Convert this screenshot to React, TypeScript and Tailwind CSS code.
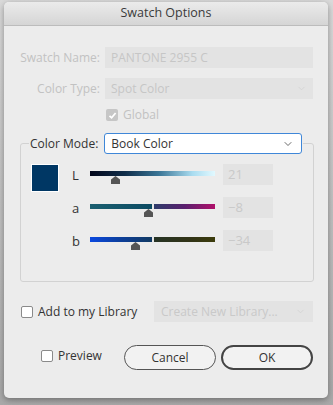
import { ChevronDown } from "lucide-react";

const font = { fontFamily: '"Open Sans", "Noto Sans", sans-serif' };

function Check({ checked, disabled }: { checked?: boolean; disabled?: boolean }) {
  if (checked) {
    return (
      <span
        className={`flex h-[12px] w-[12px] items-center justify-center rounded-[2px] ${
          disabled ? "bg-[#c6c6c6]" : "bg-[#3a7be0]"
        }`}
      >
        <svg width="9" height="9" viewBox="0 0 9 9">
          <path d="M1.5 4.8 L3.6 6.8 L7.6 2" fill="none" stroke="#fff" strokeWidth="1.8" />
        </svg>
      </span>
    );
  }
  return <span className="block h-[12px] w-[12px] rounded-[2px] border border-[#8a8a8a] bg-white" />;
}

function Thumb() {
  return (
    <svg width="11" height="8" viewBox="0 0 11 8" className="block">
      <path d="M5.5 0 L10 3.5 L10 8 L1 8 L1 3.5 Z" fill="#555" />
    </svg>
  );
}

const sliders = [
  {
    label: "L",
    value: "21",
    pos: 25.5,
    track: "bg-[linear-gradient(to_right,#02061a_0%,#0f2d4a_28%,#3a7596_55%,#a9dcf0_82%,#e2f9ff_100%)]",
    split: false,
  },
  {
    label: "a",
    value: "\u22128",
    pos: 58.5,
    track: "",
    split: true,
    left: "bg-[linear-gradient(to_right,#1b5f70,#0b4a62)]",
    right: "bg-[linear-gradient(to_right,#2d3c6a,#5a1f6e_50%,#b0106a)]",
  },
  {
    label: "b",
    value: "\u221234",
    pos: 45.5,
    track: "",
    split: true,
    left: "bg-[linear-gradient(to_right,#0a48e0,#0d3f9a_50%,#123a62)]",
    right: "bg-[linear-gradient(to_right,#273425,#323417_60%,#3c3c0c)]",
  },
];

export default function App() {
  return (
    <div className="h-[405px] w-[333px] bg-[linear-gradient(to_bottom,#dadada,#bdbdbd_60%,#a9a9a9)] pl-[4px] pr-[5px] pt-[2px] pb-[7px]" style={font}>
      <div className="flex h-full flex-col overflow-hidden rounded-[5px] bg-[#ececec] text-[12px] shadow-[0_2px_6px_rgba(0,0,0,0.35)]">
        <div className="flex h-[24px] items-center justify-center border-b border-[#bcbcbc] bg-[linear-gradient(to_bottom,#ebebeb,#d5d5d5)] text-[12.5px] text-[#3a3a3a]">
          Swatch Options
        </div>

        <div className="mt-[21px] flex h-[21px] items-center">
          <span className="w-[97px] pr-[1px] text-right text-[#c2c2c2]">Swatch Name:</span>
          <div className="ml-[4px] flex h-[21px] w-[208px] items-center bg-[#e3e3e3] px-[6px] text-[#c6c6c6]">
            PANTONE 2955 C
          </div>
        </div>

        <div className="mt-[10px] flex h-[21px] items-center">
          <span className="w-[97px] pr-[1px] text-right text-[#c2c2c2]">Color Type:</span>
          <div className="ml-[4px] flex h-[21px] w-[208px] items-center justify-between bg-[#e3e3e3] px-[6px] text-[#c6c6c6]">
            Spot Color
            <ChevronDown size={11} strokeWidth={1.5} className="text-[#cfcfcf]" />
          </div>
        </div>

        <div className="mt-[10px] flex h-[12px] items-center pl-[102px] text-[#c2c2c2]">
          <Check checked disabled />
          <span className="ml-[5px]">Global</span>
        </div>

        <fieldset className="mx-[16px] mt-[12px] h-[149px] rounded-[3px] border border-[#d2d2d2] px-[10px]">
          <legend className="ml-[-2px] flex items-center whitespace-nowrap px-[1px] text-[#333]">
            <span>Color Mode:</span>
            <div className="ml-[6px] flex h-[21px] w-[198px] items-center justify-between rounded-[3px] border border-[#3f87d8] bg-white pl-[6px] pr-[7px]">
              Book Color
              <ChevronDown size={12} strokeWidth={1.6} className="text-[#444]" />
            </div>
          </legend>

          <div className="mt-[10px] flex">
            <div className="h-[28px] w-[28px] border border-white bg-[#003764]" />
            <div className="ml-[5px] flex flex-col gap-[12px]">
              {sliders.map((s) => (
                <div key={s.label} className="flex h-[21px] items-center">
                  <span className="w-[26px] pl-[8px] pt-[3px] text-[13px] text-[#333]">{s.label}</span>
                  <div className="relative h-[21px] w-[125px]">
                    {s.split ? (
                      <div className="absolute left-0 top-[7px] flex h-[5px] w-full">
                        <div className={`h-full flex-1 ${s.left}`} />
                        <div className="h-full w-[2px] bg-[#e6e6e6]" />
                        <div className={`h-full flex-1 ${s.right}`} />
                      </div>
                    ) : (
                      <div className={`absolute left-0 top-[7px] h-[5px] w-full ${s.track}`} />
                    )}
                    <div className="absolute top-[12px]" style={{ left: `${s.pos - 5.5}px` }}>
                      <Thumb />
                    </div>
                  </div>
                  <div className="ml-[8px] flex h-[21px] w-[50px] items-center bg-[#e3e3e3] px-[5px] text-[13px] text-[#c9c9c9]">
                    {s.value}
                  </div>
                </div>
              ))}
            </div>
          </div>
        </fieldset>

        <div className="mt-[19px] flex h-[21px] items-center pl-[17px] text-[#333]">
          <Check />
          <span className="ml-[5px]">Add to my Library</span>
          <div className="ml-auto mr-[15px] flex h-[21px] w-[159px] items-center justify-between bg-[#e3e3e3] px-[7px] text-[#c9c9c9]">
            Create New Library...
            <ChevronDown size={11} strokeWidth={1.5} className="text-[#cfcfcf]" />
          </div>
        </div>

        <div className="mt-[23px] flex items-center pl-[37px] pr-[15px] text-[#333]">
          <div className="flex items-center pb-[3px]">
            <Check />
            <span className="ml-[5px]">Preview</span>
          </div>
          <button className="ml-auto h-[25px] w-[92px] rounded-full border border-[#555] bg-[#f2f2f2] text-[#333]">
            Cancel
          </button>
          <button className="ml-[5px] h-[25px] w-[92px] rounded-full border-2 border-[#444] bg-[#f2f2f2] text-[#333]">
            OK
          </button>
        </div>
      </div>
    </div>
  );
}
